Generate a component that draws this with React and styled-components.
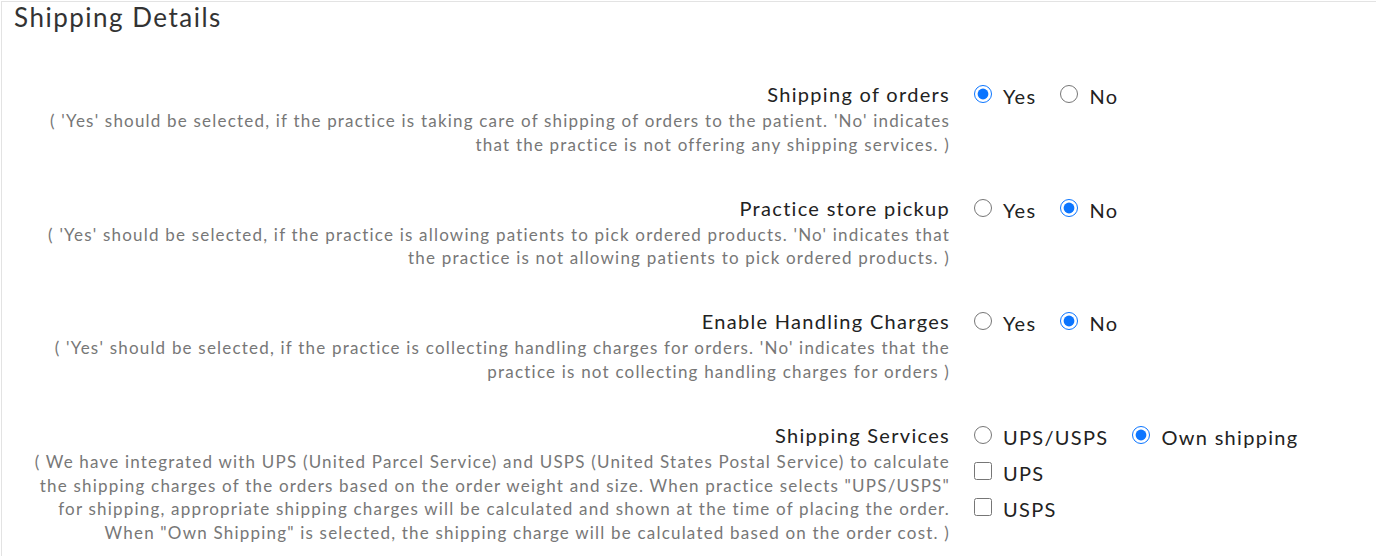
import React from "react";
import styled, { createGlobalStyle } from "styled-components";

const GlobalStyle = createGlobalStyle`
  html, body {
    margin: 0;
    padding: 0;
    background: #ffffff;
    font-family: Lato, "Open Sans", sans-serif;
  }
`;

const settings = [
  {
    label: "Shipping of orders",
    name: "shipping",
    value: "yes",
    desc: [
      "( 'Yes' should be selected, if the practice is taking care of shipping of orders to the patient. 'No' indicates",
      "that the practice is not offering any shipping services. )",
    ],
  },
  {
    label: "Practice store pickup",
    name: "pickup",
    value: "no",
    desc: [
      "( 'Yes' should be selected, if the practice is allowing patients to pick ordered products. 'No' indicates that",
      "the practice is not allowing patients to pick ordered products. )",
    ],
  },
  {
    label: "Enable Handling Charges",
    name: "handling",
    value: "no",
    desc: [
      "( 'Yes' should be selected, if the practice is collecting handling charges for orders. 'No' indicates that the",
      "practice is not collecting handling charges for orders )",
    ],
  },
];

function App() {
  return (
    <>
      <GlobalStyle />
      <Panel>
        <Title>Shipping Details</Title>
        <Rows>
          {settings.map((s) => (
            <Row key={s.name}>
              <LabelCol>
                <Label>{s.label}</Label>
                <Description>
                  {s.desc.map((line) => (
                    <div key={line}>{line}</div>
                  ))}
                </Description>
              </LabelCol>
              <Options>
                <OptionLine>
                  <Option>
                    <Radio type="radio" name={s.name} defaultChecked={s.value === "yes"} />
                    Yes
                  </Option>
                  <Option>
                    <Radio type="radio" name={s.name} defaultChecked={s.value === "no"} />
                    No
                  </Option>
                </OptionLine>
              </Options>
            </Row>
          ))}
          <Row>
            <LabelCol>
              <Label>Shipping Services</Label>
              <Description>
                <div>( We have integrated with UPS (United Parcel Service) and USPS (United States Postal Service) to calculate</div>
                <div>the shipping charges of the orders based on the order weight and size. When practice selects "UPS/USPS"</div>
                <div>for shipping, appropriate shipping charges will be calculated and shown at the time of placing the order.</div>
                <div>When "Own Shipping" is selected, the shipping charge will be calculated based on the order cost. )</div>
              </Description>
            </LabelCol>
            <Options>
              <OptionLine>
                <Option>
                  <Radio type="radio" name="service" />
                  UPS/USPS
                </Option>
                <Option>
                  <Radio type="radio" name="service" defaultChecked />
                  Own shipping
                </Option>
              </OptionLine>
              <OptionLine>
                <Option>
                  <Check type="checkbox" />
                  UPS
                </Option>
              </OptionLine>
              <OptionLine>
                <Option>
                  <Check type="checkbox" />
                  USPS
                </Option>
              </OptionLine>
            </Options>
          </Row>
        </Rows>
      </Panel>
    </>
  );
}

export default App;

const Panel = styled.div`
  margin: 1px 1px 0 1px;
  border-top: 1px solid #e3e3e3;
  border-left: 1px solid #e3e3e3;
  min-height: 555px;
  box-sizing: border-box;
  padding: 0 0 0 12px;
`;

const Title = styled.h2`
  margin: 0;
  font-size: 26px;
  font-weight: 400;
  line-height: 30px;
  letter-spacing: 1.5px;
  color: #333333;
`;

const Rows = styled.div`
  display: flex;
  flex-direction: column;
  gap: 38.5px;
  padding-top: 49px;
`;

const Row = styled.div`
  display: flex;
  gap: 24px;
`;

const LabelCol = styled.div`
  width: 936px;
  text-align: right;
`;

const Label = styled.div`
  font-size: 20px;
  line-height: 26px;
  letter-spacing: 1.3px;
  color: #222222;
  margin-bottom: 2px;
`;

const Description = styled.div`
  font-size: 17px;
  line-height: 23.6px;
  letter-spacing: 1.2px;
  color: #777777;
`;

const Options = styled.div`
  display: flex;
  flex-direction: column;
  gap: 8px;
`;

const OptionLine = styled.div`
  display: flex;
  gap: 24px;
`;

const Option = styled.label`
  display: flex;
  align-items: center;
  gap: 11px;
  font-size: 20px;
  line-height: 26px;
  letter-spacing: 1.3px;
  color: #222222;
  padding-top: 2px;
`;

const Radio = styled.input`
  width: 18px;
  height: 18px;
  margin: 0;
  accent-color: #0b75ff;
  position: relative;
  top: -2px;
`;

const Check = styled.input`
  width: 18px;
  height: 18px;
  margin: 0;
  position: relative;
  top: -2px;
`;
